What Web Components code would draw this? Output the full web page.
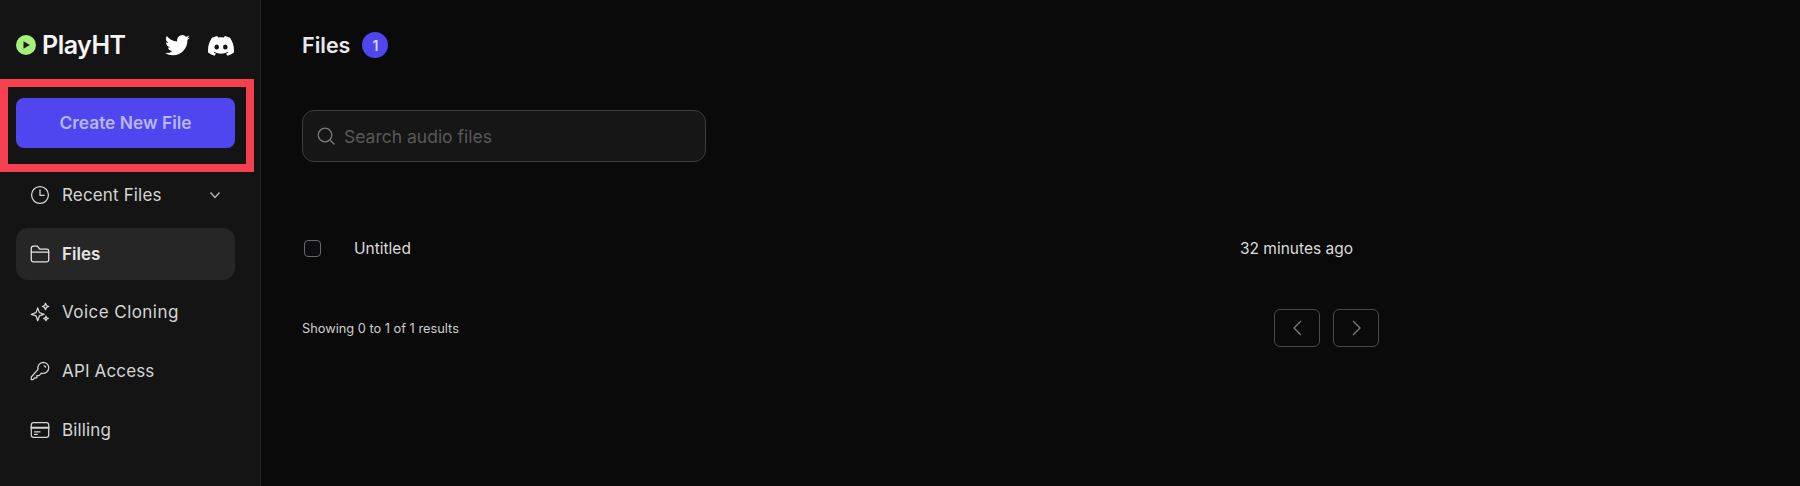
<!doctype html>
<html><head><meta charset="utf-8"><style>
html,body{margin:0;height:100%;background:#0a0a0a;font-family:Inter,"Liberation Sans",sans-serif}
</style></head><body>
<app-shell>
<side-bar slot="side">
  <nav-item label="Recent Files" icon="clock" chevron></nav-item>
  <nav-item label="Files" icon="folder" active></nav-item>
  <nav-item label="Voice Cloning" icon="sparkles" style="letter-spacing:.45px"></nav-item>
  <nav-item label="API Access" icon="key"></nav-item>
  <nav-item label="Billing" icon="card"></nav-item>
</side-bar>
<files-page slot="main"></files-page>
</app-shell>
<script>
const ICONS={
clock:'<circle cx="12" cy="12" r="9.2"/><path d="M12 6.5V12.4H16.5"/>',
folder:'<path d="M2.5 18.5V5.5A2 2 0 0 1 4.5 3.5H9.2L11.7 6.7H19.5A2 2 0 0 1 21.5 8.700V18.500A2 2 0 0 1 19.500 20.500H4.500A2 2 0 0 1 2.500 18.500Z"/><path d="M2.500 10H21.500"/>',
sparkles:'<path d="M9.500 7.500 11.300 12.700 16.500 14.500 11.300 16.300 9.500 21.500 7.700 16.300 2.500 14.500 7.700 12.700Z"/><path d="M18 2.500 19 5 21.500 6 19 7 18 9.500 17 7 14.500 6 17 5Z"/><path d="M18.500 16.500 19.200 18.300 21 19 19.200 19.700 18.500 21.500 17.800 19.700 16 19 17.800 18.300Z"/>',
key:'<path d="M15.500 2.500A6 6 0 0 1 21.500 8.500 6 6 0 0 1 13.700 14.300L11 17H8.500V19.500H6L4.500 21.500H2.500V18.500L9.900 10.200A6 6 0 0 1 15.500 2.500Z"/><path d="M16.500 6.300A1.600 1.600 0 0 1 18 7.800"/>',
card:'<rect x="2.500" y="4" width="19" height="16" rx="2.500"/><path d="M2.500 9.500H21.500" stroke-width="2.200"/><path d="M6 14H12M6 16.800H9"/>'
};
function def(name,html,init){
  customElements.define(name,class extends HTMLElement{
    constructor(){super();this.attachShadow({mode:'open'}).innerHTML=html;}
    connectedCallback(){init&&init.call(this,this.shadowRoot)}
  });
}
def('app-shell',`<style>
:host{display:grid;grid-template-columns:261px 1fr;height:486px;overflow:hidden;position:relative}
</style><slot name="side"></slot><slot name="main"></slot>`);

def('side-bar',`<style>
:host{display:block;box-sizing:border-box;width:261px;height:486px;background:#141414;border-right:1px solid #262626;position:relative;font-family:Inter,"Liberation Sans",sans-serif}
.head{display:flex;align-items:center;height:88px;padding:2px 26px 0 16px;box-sizing:border-box}
.logo{font-size:25px;font-weight:600;color:#f4f4f4;margin-left:6px;letter-spacing:-.5px;line-height:1;padding-top:1px}
.soc{margin-left:auto;display:flex;gap:18px;align-items:center;padding-top:1px}
.cta{box-sizing:border-box;margin:10px 25px 0 16px;height:50px;padding-bottom:2px;border-radius:8px;background:#4f46f0;color:#b9b6f7;font-weight:600;font-size:17.400px;display:flex;align-items:center;justify-content:center}
.nav{display:flex;flex-direction:column;gap:6.700px;margin:21px 25px 0 16px}
.mark{position:absolute;left:0;top:79px;width:254px;height:93px;box-sizing:border-box;border:8px solid #f4404f;pointer-events:none}
</style>
<div class="head">
<svg width="20" height="20" viewBox="0 0 20 20"><circle cx="10" cy="10" r="10" fill="#a6f07c"/><path d="M7.500 6.200 13.800 10 7.500 13.800Z" fill="#1a1a1a"/></svg>
<span class="logo">PlayHT</span>
<div class="soc">
<svg width="25" height="21" viewBox="0 0 24 20" fill="#fff"><path d="M24 2.400a9.800 9.800 0 0 1-2.800.8A4.900 4.900 0 0 0 23.300.5a9.800 9.800 0 0 1-3.100 1.200A4.900 4.900 0 0 0 11.800 6.200 13.900 13.900 0 0 1 1.700.9a4.900 4.900 0 0 0 1.500 6.500A4.900 4.900 0 0 1 1 6.800v.1a4.900 4.900 0 0 0 3.900 4.800 4.900 4.900 0 0 1-2.200.1 4.900 4.900 0 0 0 4.600 3.400A9.900 9.900 0 0 1 0 17.200 13.900 13.900 0 0 0 7.500 19.400c9.100 0 14-7.500 14-14v-.6A10 10 0 0 0 24 2.400Z"/></svg>
<svg width="26" height="20" viewBox="0 0 26 20" fill="#fff"><path d="M22 1.700A21 21 0 0 0 16.700 0l-.7 1.400a19.500 19.500 0 0 0-6 0L9.300 0A21 21 0 0 0 4 1.700C.6 6.700-.3 11.600.1 16.400A21 21 0 0 0 6.600 19.700l1.400-2.200c-.8-.3-1.500-.6-2.200-1.100l.5-.4a15 15 0 0 0 13.400 0l.5.4c-.7.5-1.400.8-2.200 1.100l1.400 2.200a21 21 0 0 0 6.500-3.300C26.300 10.800 25 5.900 22 1.700Z"/><ellipse cx="8.700" cy="11" rx="2.300" ry="2.500" fill="#141414"/><ellipse cx="17.300" cy="11" rx="2.300" ry="2.500" fill="#141414"/></svg>
</div></div>
<div class="cta">Create New File</div>
<div class="nav"><slot></slot></div>
<div class="mark"></div>`);

def('nav-item',`<style>
:host{display:flex;align-items:center;height:52px;padding:0 14px 0 13px;box-sizing:border-box;border-radius:12px;color:#d4d4d4;font-size:17px;gap:11px;letter-spacing:.15px}
:host([active]){background:#262626;font-weight:600;color:#e5e5e5;letter-spacing:0}
svg.i{width:22px;height:22px;fill:none;stroke:currentColor;stroke-width:1.400;stroke-linecap:round;stroke-linejoin:round;flex:none}
svg.c{width:12px;height:12px;margin-left:auto;fill:none;stroke:#b5b5b5;stroke-width:1.400;display:none}
:host([chevron]) svg.c{display:block}
</style><svg class="i" viewBox="0 0 24 24"></svg><span></span><svg class="c" viewBox="0 0 12 12"><path d="M1.500 3.500 6 8.500 10.500 3.500"/></svg>`,function(r){
  r.querySelector('.i').innerHTML=ICONS[this.getAttribute('icon')];
  r.querySelector('span').textContent=this.getAttribute('label');
});

def('files-page',`<style>
:host{display:block;box-sizing:border-box;padding:0 0 0 41px;width:1539px;height:486px;background:#0a0a0a;font-family:Inter,"Liberation Sans",sans-serif;color:#e5e5e5}
.title{display:flex;align-items:center;height:26px;padding-top:32px;gap:12px}
h1{margin:0;font-size:21.500px;font-weight:600;color:#e8e8e8;line-height:26px}
.badge{width:26px;height:26px;border-radius:50%;background:#4f46f0;color:#dcdafc;font-size:14px;font-weight:600;display:flex;align-items:center;justify-content:center}
.search{box-sizing:border-box;margin-top:52px;width:404px;height:52px;border:1px solid #3c3c3c;border-radius:12px;background:#161616;display:flex;align-items:center;padding-left:13px;gap:8px;color:#595959;font-size:17.500px}
.row{display:grid;grid-template-columns:52px 1fr auto;align-items:center;width:1051px;margin-top:69px;height:34px;font-size:15.500px;color:#dcdcdc}
.cb{width:17px;height:17px;box-sizing:border-box;border:1.500px solid #686868;border-radius:4px;margin-left:2px;background:#0e0e12}
.foot{display:flex;align-items:center;width:1077px;margin-top:44px;height:38px;font-size:12.800px;color:#cfcfcf}
.pager{margin-left:auto;display:flex;gap:13px}
.pg{box-sizing:border-box;width:46px;height:38px;border:1.500px solid #4a4a4a;border-radius:6px;display:flex;align-items:center;justify-content:center}
.pg svg{width:9px;height:16px;fill:none;stroke:#7a7a7a;stroke-width:1.400}
</style>
<div class="title"><h1>Files</h1><span class="badge">1</span></div>
<div class="search"><svg width="20" height="20" viewBox="0 0 20 20" fill="none" stroke="#7d7d7d" stroke-width="1.300"><circle cx="9" cy="9" r="6.800"/><path d="M14 14 18.500 18.500"/></svg><span>Search audio files</span></div>
<div class="row"><span class="cb"></span><span>Untitled</span><span>32 minutes ago</span></div>
<div class="foot"><span>Showing 0 to 1 of 1 results</span><div class="pager"><span class="pg"><svg viewBox="0 0 9 16"><path d="M8 1 1 8 8 15"/></svg></span><span class="pg"><svg viewBox="0 0 9 16"><path d="M1 1 8 8 1 15"/></svg></span></div></div>`);
</script>
</body></html>
